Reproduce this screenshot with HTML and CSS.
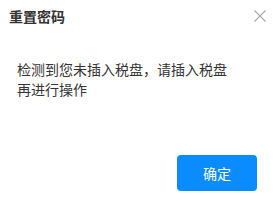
FILE: index.html
```html
<!DOCTYPE html>
<html lang="zh-CN">
<head>
    <meta charset="UTF-8">
    <title>重置密码</title>
    <link rel="stylesheet" href="styles.css">
</head>
<body>
<div class="dialog">
    <div class="dialogHeader">
        <span class="dialogTitle">重置密码</span>
        <span class="dialogClose">
            <svg width="12" height="12" viewBox="0 0 12 12"><path d="M0.5 0.5L11.5 11.5M11.5 0.5L0.5 11.5" stroke="#a8a8a8" stroke-width="1.1" fill="none"/></svg>
        </span>
    </div>
    <div class="dialogBody">
        <p class="dialogText">检测到您未插入税盘，请插入税盘再进行操作</p>
    </div>
    <div class="dialogFooter">
        <button class="okButton" type="button">确定</button>
    </div>
</div>
</body>
</html>
```

FILE: styles.css
```css
html, body {
    margin: 0;
    padding: 0;
    background-color: #fff;
}
body {
    font-family: "Noto Sans CJK SC", "Noto Sans", sans-serif;
    color: #333;
}
.dialog {
    display: flex;
    flex-direction: column;
    width: 274px;
    height: 201px;
}
.dialogHeader {
    display: flex;
    align-items: center;
    justify-content: space-between;
    height: 32px;
    padding: 0 8px 0 9px;
}
.dialogTitle {
    font-size: 14px;
    font-weight: bold;
    color: #333;
}
.dialogClose {
    display: flex;
    width: 12px;
    height: 12px;
}
.dialogBody {
    padding: 27px 17px 0 17px;
}
.dialogText {
    margin: 0;
    max-width: 216px;
    font-size: 14px;
    line-height: 20px;
    color: #333;
}
.dialogFooter {
    display: flex;
    justify-content: flex-end;
    margin-top: auto;
    padding: 0 17px 10px 0;
}
.okButton {
    width: 80px;
    height: 36px;
    border: none;
    border-radius: 4px;
    background-color: #0a8cff;
    color: #fff;
    font-family: inherit;
    font-size: 14px;
    padding: 0;
}
```
